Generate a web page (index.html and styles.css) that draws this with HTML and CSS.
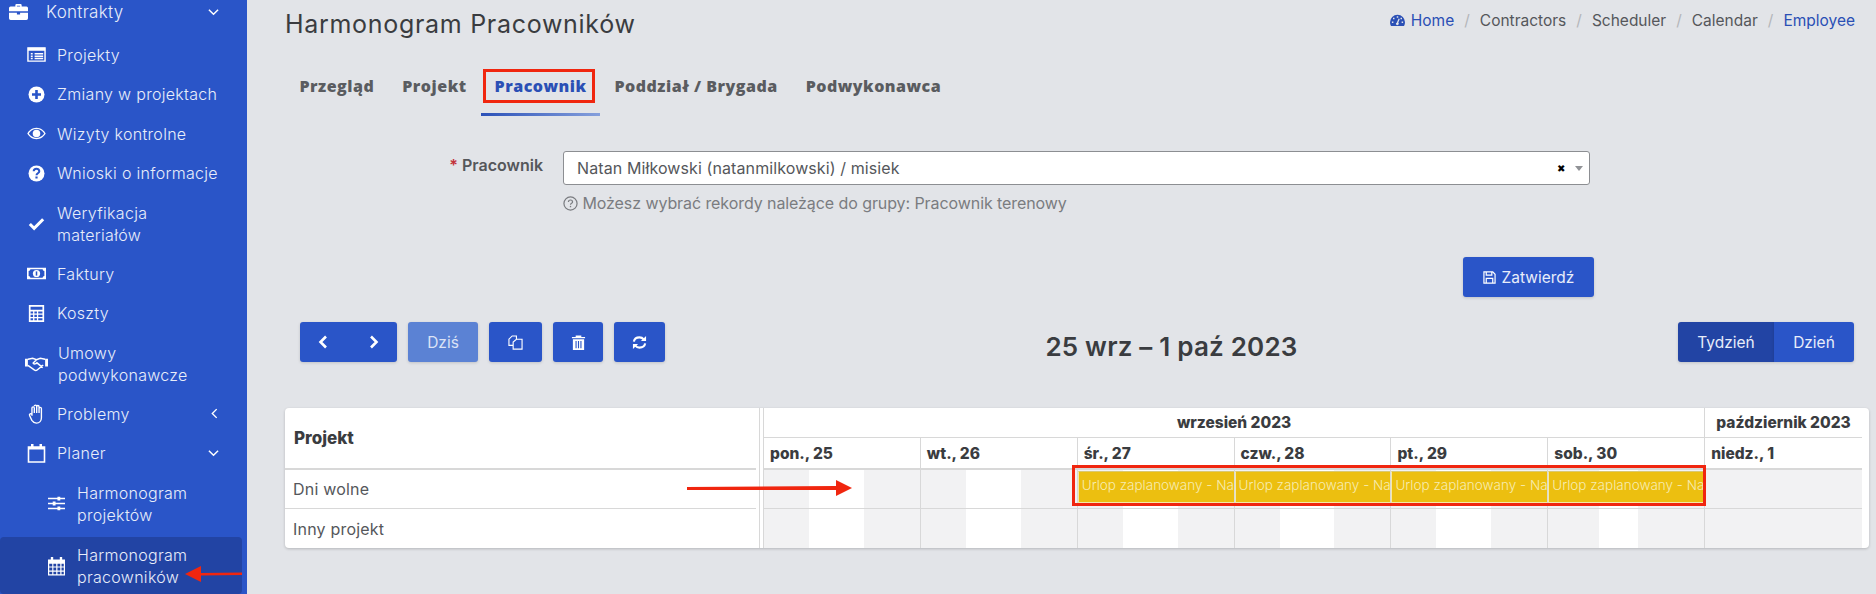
FILE: index.html
```html
<!DOCTYPE html>
<html lang="pl">
<head>
    <meta charset="UTF-8">
    <meta name="viewport" content="width=device-width, initial-scale=1.0">
    <title>Harmonogram Pracowników</title>
    <link rel="stylesheet" href="styles.css">
</head>
<body>
    <div class="layout">
        <aside class="sidebar">
            <a class="nav-top">
                <svg class="ico-top" viewBox="0 0 24 20"><path fill="#fff" d="M8 3V1.500A1.500 1.500 0 0 1 9.500 0h5A1.500 1.500 0 0 1 16 1.500V3h6a2 2 0 0 1 2 2v4H0V5a2 2 0 0 1 2-2zm2 0h4V2h-4zM0 11h10v2h4v-2h10v7a2 2 0 0 1-2 2H2a2 2 0 0 1-2-2z"/></svg>
                <span class="nav-label">Kontrakty</span>
                <svg class="chev" viewBox="0 0 12 8"><path fill="none" stroke="#fff" stroke-width="1.600" d="M1 1.500l5 5 5-5"/></svg>
            </a>
            <a class="nav-item">
                <svg class="ico" viewBox="0 0 20 16"><path fill="none" stroke="#fff" stroke-width="1.500" d="M1 1h18v14H1z"/><path fill="#fff" d="M1 1h18v3H1zM4 6.500h2V8H4zM8 6.500h9V8H8zM4 9h2v1.500H4zM8 9h9v1.500H8zM4 11.500h2V13H4zM8 11.500h9V13H8z"/></svg>
                <span class="nav-label">Projekty</span>
            </a>
            <a class="nav-item">
                <svg class="ico" viewBox="1.500 1.500 17 17"><circle cx="10" cy="10" r="8" fill="#fff"/><path fill="#2a55c8" d="M8.700 5.500h2.600v3.200h3.200v2.600h-3.200v3.200H8.700v-3.200H5.500V8.700h3.200z"/></svg>
                <span class="nav-label">Zmiany w projektach</span>
            </a>
            <a class="nav-item">
                <svg class="ico" viewBox="0 0 20 14"><path fill="#fff" fill-rule="evenodd" d="M10 1c4.500 0 8 3 9.700 6-1.700 3-5.200 6-9.700 6S2 10 .3 7C2 4 5.500 1 10 1zm0 1.300C6.400 2.300 3.500 4.500 1.900 7c1.600 2.500 4.500 4.700 8.100 4.700s6.500-2.200 8.100-4.700C16.500 4.500 13.600 2.300 10 2.300zM10 3a4 4 0 1 1 0 8 4 4 0 0 1 0-8z"/></svg>
                <span class="nav-label">Wizyty kontrolne</span>
            </a>
            <a class="nav-item">
                <svg class="ico" viewBox="1.500 1.500 17 17"><circle cx="10" cy="10" r="8" fill="#fff"/><path fill="none" stroke="#2a55c8" stroke-width="2" d="M7.200 7.800c0-3.500 5.600-3.500 5.600 0 0 2-2.800 2-2.800 4"/><path fill="#2a55c8" d="M8.900 13h2.200v2H8.900z"/></svg>
                <span class="nav-label">Wnioski o informacje</span>
            </a>
            <a class="nav-item nav-tall">
                <svg class="ico" viewBox="0 0 20 16"><path fill="none" stroke="#fff" stroke-width="3.200" d="M3 8.500l4.500 4.500L17 3.500"/></svg>
                <span class="nav-label">Weryfikacja<br>materiałów</span>
            </a>
            <a class="nav-item">
                <svg class="ico" viewBox="0 0 20 14"><path fill="#fff" fill-rule="evenodd" d="M0 1h20v12H0zm3.500 1.500c0 1-.8 1.800-1.800 1.800v5.400c1 0 1.800.8 1.800 1.800h13c0-1 .8-1.800 1.800-1.800V4.300c-1 0-1.800-.8-1.800-1.800z"/><circle cx="10" cy="7" r="3.800" fill="#fff"/><path fill="#2a55c8" d="M9.200 4.800h1.600v4.400H9.200z"/></svg>
                <span class="nav-label">Faktury</span>
            </a>
            <a class="nav-item">
                <svg class="ico" viewBox="0 0 18 20"><path fill="#fff" fill-rule="evenodd" d="M0 0h18v20H0zm2 2v3.500h14V2zm0 5.500V10h3V7.500zm4.500 0V10h3V7.500zm4.500 0V10h5V7.500zM2 11.500V14h3v-2.500zm4.500 0V14h3v-2.500zm4.500 0V14h5v-2.500zM2 15.500V18h3v-2.500zm4.500 0V18h3v-2.500zm4.500 0V18h5v-2.500z"/></svg>
                <span class="nav-label">Koszty</span>
            </a>
            <a class="nav-item nav-tall">
                <svg class="ico ico-wide" viewBox="0 0 24 16"><path fill="none" stroke="#fff" stroke-width="1.500" d="M3 3.500l5-1 4 1.500 4-1.500 5 1M3 10l7 5c1 .5 2 .3 3-.5l6-5M12 4L8.500 7.500c1 1.500 3 1 4-.2l6 5"/><path fill="#fff" d="M0 3h3v8H0zM21 3h3v8h-3z"/></svg>
                <span class="nav-label">Umowy<br>podwykonawcze</span>
            </a>
            <a class="nav-item">
                <svg class="ico ico-tall" viewBox="0 0 18 22"><path fill="none" stroke="#fff" stroke-width="1.500" d="M4 13V4.500a1.300 1.300 0 0 1 2.600 0V10m0-7.500a1.300 1.300 0 0 1 2.600 0V10m0-7a1.300 1.300 0 0 1 2.600 0v7m0-5a1.300 1.300 0 0 1 2.600 0v10c0 3.500-2.200 6-5.500 6-2.700 0-3.700-1-5-3L1.500 13c-1-2 1.300-3.200 2.500-1.500"/></svg>
                <span class="nav-label">Problemy</span>
                <svg class="chev chev-left" viewBox="0 0 8 12"><path fill="none" stroke="#fff" stroke-width="1.600" d="M6.500 1l-5 5 5 5"/></svg>
            </a>
            <a class="nav-item">
                <svg class="ico ico-tall" viewBox="0 0 18 20"><path fill="none" stroke="#fff" stroke-width="1.600" d="M1 4h16v15H1z"/><path fill="#fff" d="M1 4h16v2.500H1zM3.500 1h2.500v4H3.500zM12 1h2.500v4H12z"/></svg>
                <span class="nav-label">Planer</span>
                <svg class="chev" viewBox="0 0 12 8"><path fill="none" stroke="#fff" stroke-width="1.600" d="M1 1.500l5 5 5-5"/></svg>
            </a>
            <a class="nav-sub">
                <svg class="ico" viewBox="0 0 18 16"><path fill="#fff" d="M0 2h18v1.600H0zM0 7.200h18v1.600H0zM0 12.400h18V14H0zM10 .8h3v4h-3zM5 6h3v4H5zM10 11.200h3v4h-3z"/></svg>
                <span class="nav-label">Harmonogram<br>projektów</span>
            </a>
            <a class="nav-sub nav-sub-active">
                <svg class="ico ico-tall" viewBox="0 0 18 20"><path fill="#fff" fill-rule="evenodd" d="M0 3h3V.500h2.500V3h7V.500H15V3h3v17H0zm1.300 4.500v3h3.200v-3zm4.400 0v3h3v-3zm4.300 0v3h3v-3zm4.300 0v3h2.400v-3zm-13 4.200v3h3.200v-3zm4.400 0v3h3v-3zm4.300 0v3h3v-3zm4.300 0v3h2.400v-3zm-13 4.300v2.700h3.200V16zm4.400 0v2.700h3V16zm4.300 0v2.700h3V16zm4.300 0v2.700h2.400V16z"/></svg>
                <span class="nav-label">Harmonogram<br>pracowników</span>
            </a>
        </aside>

        <main class="main">
            <header class="page-head">
                <h1>Harmonogram Pracowników</h1>
                <ol class="crumbs">
                    <li class="crumb-link"><svg class="ico-gauge" viewBox="0 0 20 16"><path fill="#2a4fb5" fill-rule="evenodd" d="M10 1a10 10 0 0 1 10 10c0 1.800-.5 3.500-1.300 5H1.300A10 10 0 0 1 0 11 10 10 0 0 1 10 1zM9 3v2h2V3zM4 5v2h2V5zm10 0v2h2V5zM2.500 10v2h2v-2zm13 0v2h2v-2zM11.500 6L9 11.500a1.800 1.800 0 1 0 2 .3L13 6.500z"/></svg> Home</li>
                    <li>Contractors</li>
                    <li>Scheduler</li>
                    <li>Calendar</li>
                    <li class="crumb-link">Employee</li>
                </ol>
            </header>

            <nav class="tabs">
                <a class="tab">Przegląd</a>
                <a class="tab">Projekt</a>
                <a class="tab tab-active"><span class="mark-box">Pracownik</span></a>
                <a class="tab">Poddział / Brygada</a>
                <a class="tab">Podwykonawca</a>
            </nav>

            <div class="form-row">
                <label class="form-label"><span class="req">*</span> Pracownik</label>
                <div class="form-field">
                    <div class="select">
                        <span class="select-value">Natan Miłkowski (natanmilkowski) / misiek</span>
                        <span class="select-x">✖</span>
                        <span class="select-arrow"></span>
                    </div>
                    <p class="hint">
                        <svg class="ico-hint" viewBox="0 0 16 16"><circle cx="8" cy="8" r="7" fill="none" stroke="currentColor" stroke-width="1.300"/><path fill="none" stroke="currentColor" stroke-width="1.300" d="M5.800 6.300c0-2.700 4.400-2.700 4.400 0 0 1.500-2.200 1.500-2.200 3"/><path fill="currentColor" d="M7.300 10.500h1.400V12H7.300z"/></svg>
                        Możesz wybrać rekordy należące do grupy: Pracownik terenowy
                    </p>
                </div>
            </div>

            <div class="submit-row">
                <button class="btn btn-submit">
                    <svg class="ico-save" viewBox="0 0 14 14"><path fill="none" stroke="#fff" stroke-width="1.300" d="M1 1h9.500L13 3.500V13H1zM3.500 1v3.500h6V1M3.500 13V8h7v5"/></svg>
                    Zatwierdź
                </button>
            </div>

            <div class="toolbar">
                <div class="toolbar-left">
                    <div class="btn btn-pair">
                        <svg class="ico-arrow" viewBox="0 0 10 14"><path fill="none" stroke="#fff" stroke-width="2.600" d="M8 1.500L2.500 7 8 12.500"/></svg>
                        <svg class="ico-arrow" viewBox="0 0 10 14"><path fill="none" stroke="#fff" stroke-width="2.600" d="M2 1.500L7.500 7 2 12.500"/></svg>
                    </div>
                    <button class="btn btn-today">Dziś</button>
                    <button class="btn btn-copy">
                        <svg class="ico-tool" viewBox="0 0 16 16"><path fill="none" stroke="#fff" stroke-width="1.200" d="M6 11H1V4.500L4.500 1H9v3M5.500 15V7.500L9 4.500h6V15z"/></svg>
                    </button>
                    <button class="btn btn-del">
                        <svg class="ico-tool" viewBox="0 0 14 16"><path fill="#fff" fill-rule="evenodd" d="M0 2h4V.500h6V2h4v1.500H0zM1 4.500h12V16H1zM3.800 6.500v7.500h1.200V6.500zm2.600 0v7.500h1.200V6.500zm2.600 0v7.500h1.200V6.500z"/></svg>
                    </button>
                    <button class="btn btn-sync">
                        <svg class="ico-tool" viewBox="0 0 16 16"><path fill="none" stroke="#fff" stroke-width="2.300" d="M2 7c.5-3 3-4.500 6-4.500 1.800 0 3.400.8 4.500 2.200M14 9c-.5 3-3 4.500-6 4.500-1.800 0-3.400-.8-4.500-2.200"/><path fill="#fff" d="M15 1v5.500H9.500zM1 15V9.500h5.500z"/></svg>
                    </button>
                </div>
                <h2 class="cal-title">25 wrz – 1 paź 2023</h2>
                <div class="view-switch">
                    <button class="btn btn-view btn-view-active">Tydzień</button>
                    <button class="btn btn-view">Dzień</button>
                </div>
            </div>

            <div class="sched-card">
                <div class="res-col">
                    <div class="res-head">Projekt</div>
                    <div class="res-row">Dni wolne</div>
                    <div class="res-row">Inny projekt</div>
                </div>
                <div class="time-col">
                    <div class="month-row">
                        <div class="month month-sep">wrzesień 2023</div>
                        <div class="month">październik 2023</div>
                    </div>
                    <div class="day-row">
                        <div class="day">pon., 25</div>
                        <div class="day">wt., 26</div>
                        <div class="day">śr., 27</div>
                        <div class="day">czw., 28</div>
                        <div class="day">pt., 29</div>
                        <div class="day">sob., 30</div>
                        <div class="day">niedz., 1</div>
                    </div>
                    <div class="lane">
                        <div class="cell cell-a"></div>
                        <div class="cell cell-a"></div>
                        <div class="cell cell-a"><div class="event">Urlop zaplanowany - Na</div></div>
                        <div class="cell cell-a"><div class="event">Urlop zaplanowany - Na</div></div>
                        <div class="cell cell-a"><div class="event">Urlop zaplanowany - Na</div></div>
                        <div class="cell cell-b"><div class="event">Urlop zaplanowany - Na</div></div>
                        <div class="cell cell-off"></div>
                    </div>
                    <div class="lane lane-last">
                        <div class="cell cell-a"></div>
                        <div class="cell cell-a"></div>
                        <div class="cell cell-a"></div>
                        <div class="cell cell-a"></div>
                        <div class="cell cell-a"></div>
                        <div class="cell cell-b"></div>
                        <div class="cell cell-off"></div>
                    </div>
                </div>
            </div>

            <!-- annotations drawn over the screenshot -->
            <div class="mark-events"></div>
            <svg class="arrow arrow-lane" viewBox="0 0 165 16"><path fill="#f0260f" d="M0 7l149-1V0l16 8-16 8v-6L0 10z"/></svg>
            <svg class="arrow arrow-side" viewBox="0 0 57 16"><path fill="#f0260f" d="M57 6.500L16 7V0L0 8l16 8V9.500l41-.5z"/></svg>
        </main>
    </div>
</body>
</html>
```

FILE: styles.css
```css
* {
    box-sizing: border-box;
}
body {
    margin: 0;
    overflow: hidden;
    font-family: Inter, "Open Sans", sans-serif;
    font-size: 16px;
    color: #55575b;
    background-color: #e2e4e8;
}
.layout {
    display: flex;
    height: 594px;
}

/* sidebar */
.sidebar {
    width: 247px;
    flex: none;
    overflow: hidden;
    background-color: #2a55c8;
    color: #e8edfa;
    font-size: 16px;
    font-weight: 300;
    line-height: 22px;
}
.sidebar a {
    display: flex;
    align-items: center;
}
.nav-label {
    flex: 1;
    letter-spacing: .3px;
}
.nav-top {
    height: 24px;
    margin-bottom: 11px;
    padding-left: 9px;
    font-size: 17px;
}
.ico-top {
    width: 19px;
    height: 16px;
    margin-right: 18px;
}
.chev {
    width: 11px;
    height: 8px;
    margin-right: 28px;
}
.chev-left {
    width: 7px;
    height: 11px;
    margin-right: 29px;
}
.nav-item {
    height: 39.500px;
    padding-left: 27px;
}
.nav-tall {
    height: 61px;
}
.ico {
    width: 19px;
    height: 17px;
    flex: none;
    margin-right: 11px;
}
.ico-wide {
    width: 23px;
    margin-left: -2px;
    margin-right: 10px;
}
.ico-tall {
    height: 20px;
}
.nav-sub {
    height: 61px;
    padding-left: 48px;
}
.nav-sub .ico {
    width: 17px;
    margin-right: 12px;
}
.nav-sub-active {
    width: 242px;
    height: 57px;
    margin-top: 3px;
    border-radius: 4px;
    background-color: #2244a4;
}

/* main column */
.main {
    position: relative;
    flex: 1;
    min-width: 0;
    padding: 0 7px 0 38px;
}
.page-head {
    display: flex;
    justify-content: space-between;
    align-items: flex-start;
    padding: 10px 14px 0 0;
}
h1 {
    margin: 0;
    font-size: 25px;
    line-height: 29px;
    font-weight: 400;
    letter-spacing: .7px;
    color: #3a3c40;
}
.crumbs {
    display: flex;
    margin: 0;
    padding: 0;
    list-style: none;
    font-size: 15.500px;
    line-height: 21px;
}
.crumbs li + li::before {
    content: "/";
    margin: 0 10px;
    color: #b4b6ba;
}
.crumb-link {
    color: #2a4fb5;
}
.ico-gauge {
    width: 15px;
    height: 12px;
    margin-right: 1px;
}

.tabs {
    display: flex;
    margin-top: 23px;
    margin-left: .5px;
}
.tab {
    padding: 14px 14px 17px;
    border-bottom: 3px solid transparent;
    font-family: "Open Sans", sans-serif;
    font-size: 16px;
    line-height: 20px;
    font-weight: 800;
    letter-spacing: .5px;
    color: #5a5c60;
}
.tab-active {
    color: #2a4fb5;
    border-image: linear-gradient(90deg, #2a50b8, #86a0dc) 1;
}
.mark-box {
    position: relative;
    display: inline-block;
}
.mark-box::after {
    content: "";
    position: absolute;
    left: -12px;
    right: -9px;
    top: -7px;
    bottom: -7px;
    border: 3px solid #f0260f;
}

.form-row {
    display: flex;
    margin-top: 35px;
}
.form-label {
    width: 278px;
    flex: none;
    padding: 4px 20px 0 0;
    text-align: right;
    font-weight: 600;
    line-height: 20px;
}
.req {
    color: #c2323a;
}
.form-field {
    width: 1027px;
}
.select {
    display: flex;
    align-items: center;
    height: 34px;
    padding: 0 6px 0 13px;
    border: 1px solid #8c8e92;
    border-radius: 3px;
    background-color: #fff;
}
.select-value {
    flex: 1;
    letter-spacing: .1px;
}
.select-x {
    margin-right: 10px;
    font-size: 10px;
    color: #000;
}
.select-arrow {
    width: 0;
    height: 0;
    border-left: 4px solid transparent;
    border-right: 4px solid transparent;
    border-top: 5px solid #909296;
}
.hint {
    margin: 8px 0 0;
    line-height: 20px;
    letter-spacing: -.08px;
    color: #7a7c80;
}
.ico-hint {
    width: 15px;
    height: 15px;
    vertical-align: -2px;
}

.btn {
    display: inline-flex;
    align-items: center;
    justify-content: center;
    height: 40px;
    border: none;
    border-radius: 3px;
    background-color: #2a55c8;
    color: #e8edfa;
    font: inherit;
    font-size: 15.500px;
    box-shadow: 0 1px 3px rgba(0,0,0,0.15);
}
.submit-row {
    display: flex;
    justify-content: flex-end;
    width: 1309px;
    margin-top: 44px;
}
.btn-submit {
    width: 131px;
    gap: 6px;
}
.ico-save {
    width: 13px;
    height: 13px;
}

.toolbar {
    display: flex;
    justify-content: space-between;
    margin-top: 25px;
    padding: 0 15px;
}
.toolbar-left {
    display: flex;
    gap: 11px;
}
.btn-pair {
    width: 97px;
    justify-content: space-between;
    padding: 0 18px;
}
.ico-arrow {
    width: 10px;
    height: 14px;
}
.btn-today {
    width: 70px;
    background-color: #5b82d4;
    color: #dbe3f6;
}
.btn-copy {
    width: 53px;
}
.btn-del {
    width: 50px;
}
.btn-sync {
    width: 51px;
}
.ico-tool {
    width: 15px;
    height: 15px;
}
.cal-title {
    margin: 0;
    padding-top: 10px;
    font-size: 26px;
    line-height: 30px;
    font-weight: 600;
    letter-spacing: .2px;
    color: #3a3c40;
}
.view-switch {
    display: flex;
}
.btn-view {
    width: 80px;
    border-radius: 0 3px 3px 0;
}
.btn-view-active {
    width: 96px;
    border-radius: 3px 0 0 3px;
    background-color: #2244a4;
}

/* schedule */
.sched-card {
    display: flex;
    margin-top: 46px;
    border-radius: 4px;
    background-color: #fff;
    box-shadow: 0 1px 3px rgba(0,0,0,0.2);
    overflow: hidden;
}
.res-col {
    width: 475px;
    flex: none;
    border-right: 1px solid #d8d8d8;
}
.res-head {
    display: flex;
    align-items: center;
    height: 62px;
    margin-right: 3px;
    padding-left: 9px;
    border-bottom: 2px solid #d8d8d8;
    font-size: 17px;
    font-weight: 800;
    color: #3a3c40;
}
.res-row {
    display: flex;
    align-items: center;
    height: 39px;
    margin-right: 3px;
    padding-left: 8px;
    border-bottom: 1px solid #d8d8d8;
    letter-spacing: .2px;
}
.res-row:last-child {
    border-bottom: none;
}
.time-col {
    flex: 1;
    margin: 0 7px 0 3px;
    border-left: 1px solid #d8d8d8;
}
.month-row {
    display: grid;
    grid-template-columns: 6fr 1fr;
    height: 30px;
    border-bottom: 1px solid #d8d8d8;
}
.month {
    display: flex;
    align-items: center;
    justify-content: center;
    font-size: 15.500px;
    font-weight: 800;
    color: #3a3c40;
}
.month-sep {
    border-right: 1px solid #d8d8d8;
}
.day-row {
    display: grid;
    grid-template-columns: repeat(7, 1fr);
    height: 32px;
    border-bottom: 2px solid #d8d8d8;
}
.day {
    display: flex;
    align-items: center;
    padding-left: 6px;
    border-right: 1px solid #d8d8d8;
    font-size: 15.500px;
    font-weight: 800;
    color: #3a3c40;
}
.day:last-child {
    border-right: none;
}
.lane {
    display: grid;
    grid-template-columns: repeat(7, 1fr);
    height: 39px;
    border-bottom: 1px solid #d8d8d8;
}
.lane-last {
    border-bottom: none;
}
.cell {
    min-width: 0;
    border-right: 1px solid #d8d8d8;
}
.cell:last-child {
    border-right: none;
}
.cell-a {
    background: linear-gradient(90deg, #f2f2f3 0 29%, #fff 29% 64%, #f2f2f3 64% 100%);
}
.cell-b {
    background: linear-gradient(90deg, #f2f2f3 0 33%, #fff 33% 58%, #f2f2f3 58% 100%);
}
.cell-off {
    background-color: #f2f2f3;
}
.event {
    height: 32px;
    margin-top: 1px;
    padding-left: 3px;
    overflow: hidden;
    border-top: 1px solid #d9c870;
    border-bottom: 1px solid #f5e9a8;
    border-left: 1px solid #f5e9a8;
    background-color: #ecbf10;
    color: #f7ecb0;
    font-size: 13.500px;
    font-weight: 300;
    line-height: 27px;
    white-space: nowrap;
}

.mark-events {
    position: absolute;
    left: 825px;
    top: 465px;
    width: 634px;
    height: 41px;
    border: 3px solid #f0260f;
}
.arrow {
    position: absolute;
}
.arrow-lane {
    left: 440px;
    top: 480px;
    width: 165px;
    height: 16px;
}
.arrow-side {
    left: -62px;
    top: 566px;
    width: 57px;
    height: 16px;
}
```
